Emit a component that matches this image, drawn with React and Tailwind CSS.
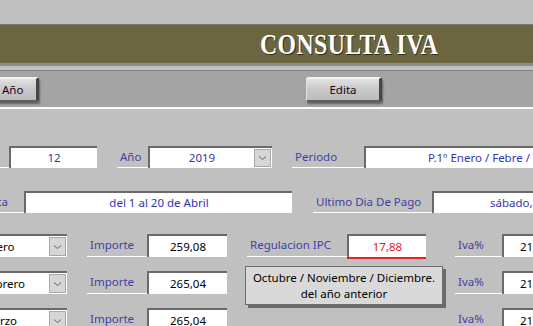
import React from "react";

const font = { fontFamily: '"Noto Sans", "Open Sans", sans-serif' };

function Label({ w, ml = 0, text, h = "h-[23px]" }) {
  return (
    <div
      className={`${h} shrink-0 flex items-center border-b border-white text-[11.5px] text-[#4040a4] pl-[3px] whitespace-nowrap`}
      style={{ width: w, marginLeft: ml }}
    >
      {text}
    </div>
  );
}

function Field({ w, ml = 0, children, className = "", h = "h-[23px]" }) {
  return (
    <div
      className={`${h} shrink-0 bg-white border-t-2 border-l-2 border-[#6a6a6a] flex items-center justify-center whitespace-nowrap overflow-hidden text-[11.5px] ${className}`}
      style={{ width: w, marginLeft: ml }}
    >
      {children}
    </div>
  );
}

function Chevron() {
  return (
    <svg width="9" height="6" viewBox="0 0 9 6">
      <path d="M1 1.5 L4.5 4.5 L8 1.5" fill="none" stroke="#606060" strokeWidth="1" />
    </svg>
  );
}

function Combo({ w, ml = 0, children, textClass = "", h = "h-[23px]" }) {
  return (
    <div
      className={`${h} shrink-0 bg-white border-t-2 border-l-2 border-[#6a6a6a] flex items-stretch whitespace-nowrap`}
      style={{ width: w, marginLeft: ml }}
    >
      <div className={`flex-1 flex items-center overflow-hidden text-[11.5px] ${textClass}`}>{children}</div>
      <div className="w-[17px] my-[1px] mr-[1px] bg-[#d6d6d6] border border-[#a8a8a8] flex items-center justify-center">
        <Chevron />
      </div>
    </div>
  );
}

function Btn({ w, ml = 0, children, className = "" }) {
  return (
    <div
      className={`h-[25px] shrink-0 rounded-[2px] bg-linear-to-b from-[#e2e2e2] via-[#c8c8c8] to-[#bcbcbc] border-t-2 border-l border-t-[#f2f2f2] border-l-[#e4e4e4] border-r-[3px] border-b-2 border-r-[#464646] border-b-[#5e5e5e] shadow-[1px_2px_2px_rgba(0,0,0,0.4)] flex items-center text-[11.5px] text-[#1c001c] ${className}`}
      style={{ width: w, marginLeft: ml }}
    >
      {children}
    </div>
  );
}

export default function App() {
  return (
    <div className="w-[533px] h-[326px] overflow-hidden bg-[#c0c0c0] flex flex-col" style={font}>
      <div className="h-[24px] shrink-0" />
      <div className="h-[1px] shrink-0 bg-[#7a7a7a]" />
      <div className="h-[38px] shrink-0 bg-[#6c6640] flex items-center pl-[260px]">
        <span
          className="text-white font-bold text-[29px] tracking-[0.5px] origin-left scale-x-[0.82] whitespace-nowrap leading-none [text-shadow:1px_1px_0_#2e2a18]"
          style={{ fontFamily: '"Liberation Serif", "DejaVu Serif", serif' }}
        >
          CONSULTA IVA
        </span>
      </div>
      <div className="h-[3px] shrink-0 bg-[#8c8c8c]" />
      <div className="h-[4px] shrink-0 bg-[#c0c0c0]" />
      <div className="h-[1px] shrink-0 bg-[#808080]" />
      <div className="h-[36px] shrink-0 bg-[#a4a4a4] flex items-start pt-[6px]">
        <Btn w={58} ml={-19} className="pl-[20px]">Año</Btn>
        <Btn w={76} ml={267} className="justify-center">Edita</Btn>
      </div>
      <div className="h-[2px] shrink-0 bg-white" />

      {/* Row 1 */}
      <div className="flex items-start mt-[37px] h-[22px] shrink-0">
        <Label w={9} text="" h="h-[22px]" />
        <Field w={88} h="h-[22px]" className="text-[#3434b0]">12</Field>
        <Label w={31} ml={20} text="Año" h="h-[22px]" />
        <Combo w={124} h="h-[22px]" textClass="justify-center text-[#3434b0]">2019</Combo>
        <Label w={72} ml={20} text="Periodo" h="h-[22px]" />
        <Field w={260} h="h-[22px]" className="text-[#3434b0] !justify-start pl-[62px]">
          P.1º Enero / Febre / Marzo
        </Field>
      </div>

      {/* Row 2 */}
      <div className="flex items-start mt-[23px] h-[22px] shrink-0">
        <div className="h-[22px] w-[24px] shrink-0 flex items-center justify-end pr-[16px] border-b border-white text-[11.5px] text-[#4040a4] whitespace-nowrap">
          Fecha Banca
        </div>
        <Field w={268} h="h-[22px]" className="text-[#3434b0]">del 1 al 20 de Abril</Field>
        <Label w={119} ml={21} text="Ultimo Dia De Pago" h="h-[22px]" />
        <Field w={200} h="h-[22px]" className="text-[#3434b0] !justify-start pl-[56px]">
          sábado, 20 de abril de 2019
        </Field>
      </div>

      {/* Row 3 */}
      <div className="flex items-start mt-[21px] h-[23px] shrink-0">
        <Combo w={87} ml={-20} textClass="text-black pl-[1px]">Enero</Combo>
        <Label w={60} ml={20} text="Importe" />
        <Field w={80} className="text-black">259,08</Field>
        <Label w={100} ml={20} text="Regulacion IPC" />
        <Field w={79} className="text-[#e01818] shadow-[0_2px_0_0_#ee2020]">17,88</Field>
        <Label w={47} ml={29} text="Iva%" />
        <Field w={80} className="text-black !justify-start pl-[16px]">21,00</Field>
      </div>

      {/* Row 4 */}
      <div className="flex items-start mt-[14px] h-[23px] shrink-0">
        <Combo w={87} ml={-20} textClass="text-black pl-[1px]">Febrero</Combo>
        <Label w={60} ml={20} text="Importe" />
        <Field w={80} className="text-black">265,04</Field>
        <div className="shrink-0 ml-[18px] -mt-[5px] w-[198px] h-[39px] bg-[#d9d9d9] border border-[#6e6e6e] shadow-[3px_3px_0_0_#6a6a6a] flex flex-col items-center justify-center text-[11.5px] leading-[16px] text-black">
          <span>Octubre / Noviembre / Diciembre.</span>
          <span>del año anterior</span>
        </div>
        <Label w={47} ml={12} text="Iva%" />
        <Field w={80} className="text-black !justify-start pl-[16px]">21,00</Field>
      </div>

      {/* Row 5 */}
      <div className="flex items-start mt-[14px] h-[23px] shrink-0">
        <Combo w={87} ml={-20} textClass="text-black pl-[1px]">Marzo</Combo>
        <Label w={60} ml={20} text="Importe" />
        <Field w={80} className="text-black">265,04</Field>
        <Label w={47} ml={228} text="Iva%" />
        <Field w={80} className="text-black !justify-start pl-[16px]">21,00</Field>
      </div>
    </div>
  );
}
